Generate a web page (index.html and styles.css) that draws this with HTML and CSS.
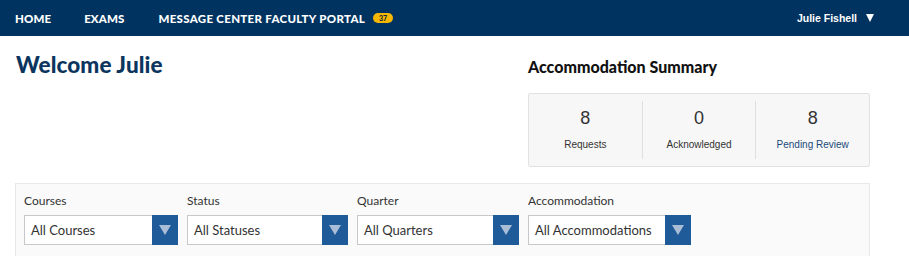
FILE: index.html
```html
<!DOCTYPE html>
<html>
<head>
<meta charset="utf-8">
<link rel="stylesheet" href="styles.css">
</head>
<body>
<nav class="nav">
  <div class="nav-left">
    <a class="nav-item">HOME</a>
    <a class="nav-item">EXAMS</a>
    <a class="nav-item nav-long">MESSAGE CENTER FACULTY PORTAL <span class="badge">37</span></a>
  </div>
  <div class="nav-user">Julie Fishell <span class="caret"></span></div>
</nav>
<main class="main">
  <div class="top">
    <h1 class="welcome">Welcome Julie</h1>
    <section class="summary">
      <h2 class="summary-title">Accommodation Summary</h2>
      <div class="summary-box">
        <div class="stat"><div class="num">8</div><div class="lbl">Requests</div></div>
        <div class="stat"><div class="num">0</div><div class="lbl">Acknowledged</div></div>
        <div class="stat"><div class="num">8</div><div class="lbl lbl-link">Pending Review</div></div>
      </div>
    </section>
  </div>
  <section class="filters">
    <div class="field f-courses">
      <label>Courses</label>
      <div class="select"><span class="val">All Courses</span><span class="btn"><span class="tri"></span></span></div>
    </div>
    <div class="field f-status">
      <label>Status</label>
      <div class="select"><span class="val">All Statuses</span><span class="btn"><span class="tri"></span></span></div>
    </div>
    <div class="field f-quarter">
      <label>Quarter</label>
      <div class="select"><span class="val">All Quarters</span><span class="btn"><span class="tri"></span></span></div>
    </div>
    <div class="field f-accom">
      <label>Accommodation</label>
      <div class="select"><span class="val">All Accommodations</span><span class="btn"><span class="tri"></span></span></div>
    </div>
  </section>
</main>
</body>
</html>
```
FILE: styles.css
```css
* { box-sizing: border-box; }
html, body { margin: 0; padding: 0; background: #fff; }
body { font-family: "Lato", "Liberation Sans", sans-serif; color: #333; }

.nav {
  height: 36px;
  background: #00335f;
  display: flex;
  align-items: center;
  justify-content: space-between;
  padding: 0 35px 0 15px;
  color: #fff;
}
.nav-left { display: flex; align-items: center; }
.nav-item {
  font-family: "Lato", "Liberation Sans", sans-serif;
  font-weight: 900;
  font-size: 11.5px;
  letter-spacing: 0.1px;
  margin-right: 33px;
  display: flex;
  align-items: center;
}
.nav-long { letter-spacing: 0.3px; margin-left: 1px; }
.badge {
  display: inline-block;
  margin-left: 8px;
  width: 20px;
  height: 10px;
  line-height: 10px;
  border-radius: 5px;
  background: #f5b700;
  color: #1c2b3a;
  font-size: 7px;
  font-weight: 900;
  letter-spacing: 0;
  text-align: center;
}
.nav-user {
  font-family: "Liberation Sans", sans-serif;
  font-weight: bold;
  font-size: 10.5px;
  display: flex;
  align-items: center;
}
.caret {
  display: inline-block;
  margin-left: 9px;
  width: 0; height: 0;
  border-left: 4.5px solid transparent;
  border-right: 4.5px solid transparent;
  border-top: 8px solid #fff;
}

.main { padding: 0 39px 0 15px; }
.top { display: flex; justify-content: space-between; }
.welcome {
  margin: 15px 0 0 1px;
  font-family: "Lato", sans-serif;
  font-weight: 900;
  font-size: 22.5px;
  color: #0b355e;
  letter-spacing: 0.1px;
}
.summary { width: 342px; }
.summary-title {
  margin: 21px 0 0 0;
  font-family: "Lato", sans-serif;
  font-weight: 900;
  font-size: 16px;
  color: #111;
  height: 20px;
}
.summary-box {
  margin-top: 16px;
  height: 74px;
  background: #f7f7f7;
  border: 1px solid #e2e2e2;
  border-radius: 2px;
  display: flex;
  align-items: stretch;
  padding: 7px 0;
}
.stat {
  flex: 1;
  display: flex;
  flex-direction: column;
  align-items: center;
  border-left: 1px solid #e0e0e0;
}
.stat:first-child { border-left: none; }
.num {
  font-family: "Liberation Sans", sans-serif;
  font-size: 18px;
  color: #333;
  margin-top: 7px;
  line-height: 20px;
}
.lbl {
  font-family: "Liberation Sans", sans-serif;
  font-size: 10px;
  color: #333;
  margin-top: 11px;
}
.lbl-link { color: #1a4a7a; }

.filters {
  margin-top: 16px;
  height: 80px;
  background: #fafafa;
  border: 1px solid #e8e8e8;
  border-bottom: none;
  display: flex;
  padding: 9px 0 0 8px;
}
.field { display: flex; flex-direction: column; margin-right: 9px; }
.field label { font-size: 12px; color: #333; line-height: 16px; height: 22px; }
.f-courses { width: 154px; }
.f-status { width: 161px; }
.f-quarter { width: 162px; }
.f-accom { width: 163px; }
.select {
  height: 30px;
  background: #fff;
  border: 1px solid #c8c8c8;
  display: flex;
  align-items: center;
}
.val { flex: 1; padding-left: 6px; font-size: 13px; color: #333; }
.btn {
  width: 26px;
  height: 30px;
  margin: -1px -1px -1px 0;
  background: #1f5a99;
  display: flex;
  align-items: center;
  justify-content: center;
}
.tri {
  width: 0; height: 0;
  border-left: 6px solid transparent;
  border-right: 6px solid transparent;
  border-top: 10px solid #a9bdd6;
}
```
